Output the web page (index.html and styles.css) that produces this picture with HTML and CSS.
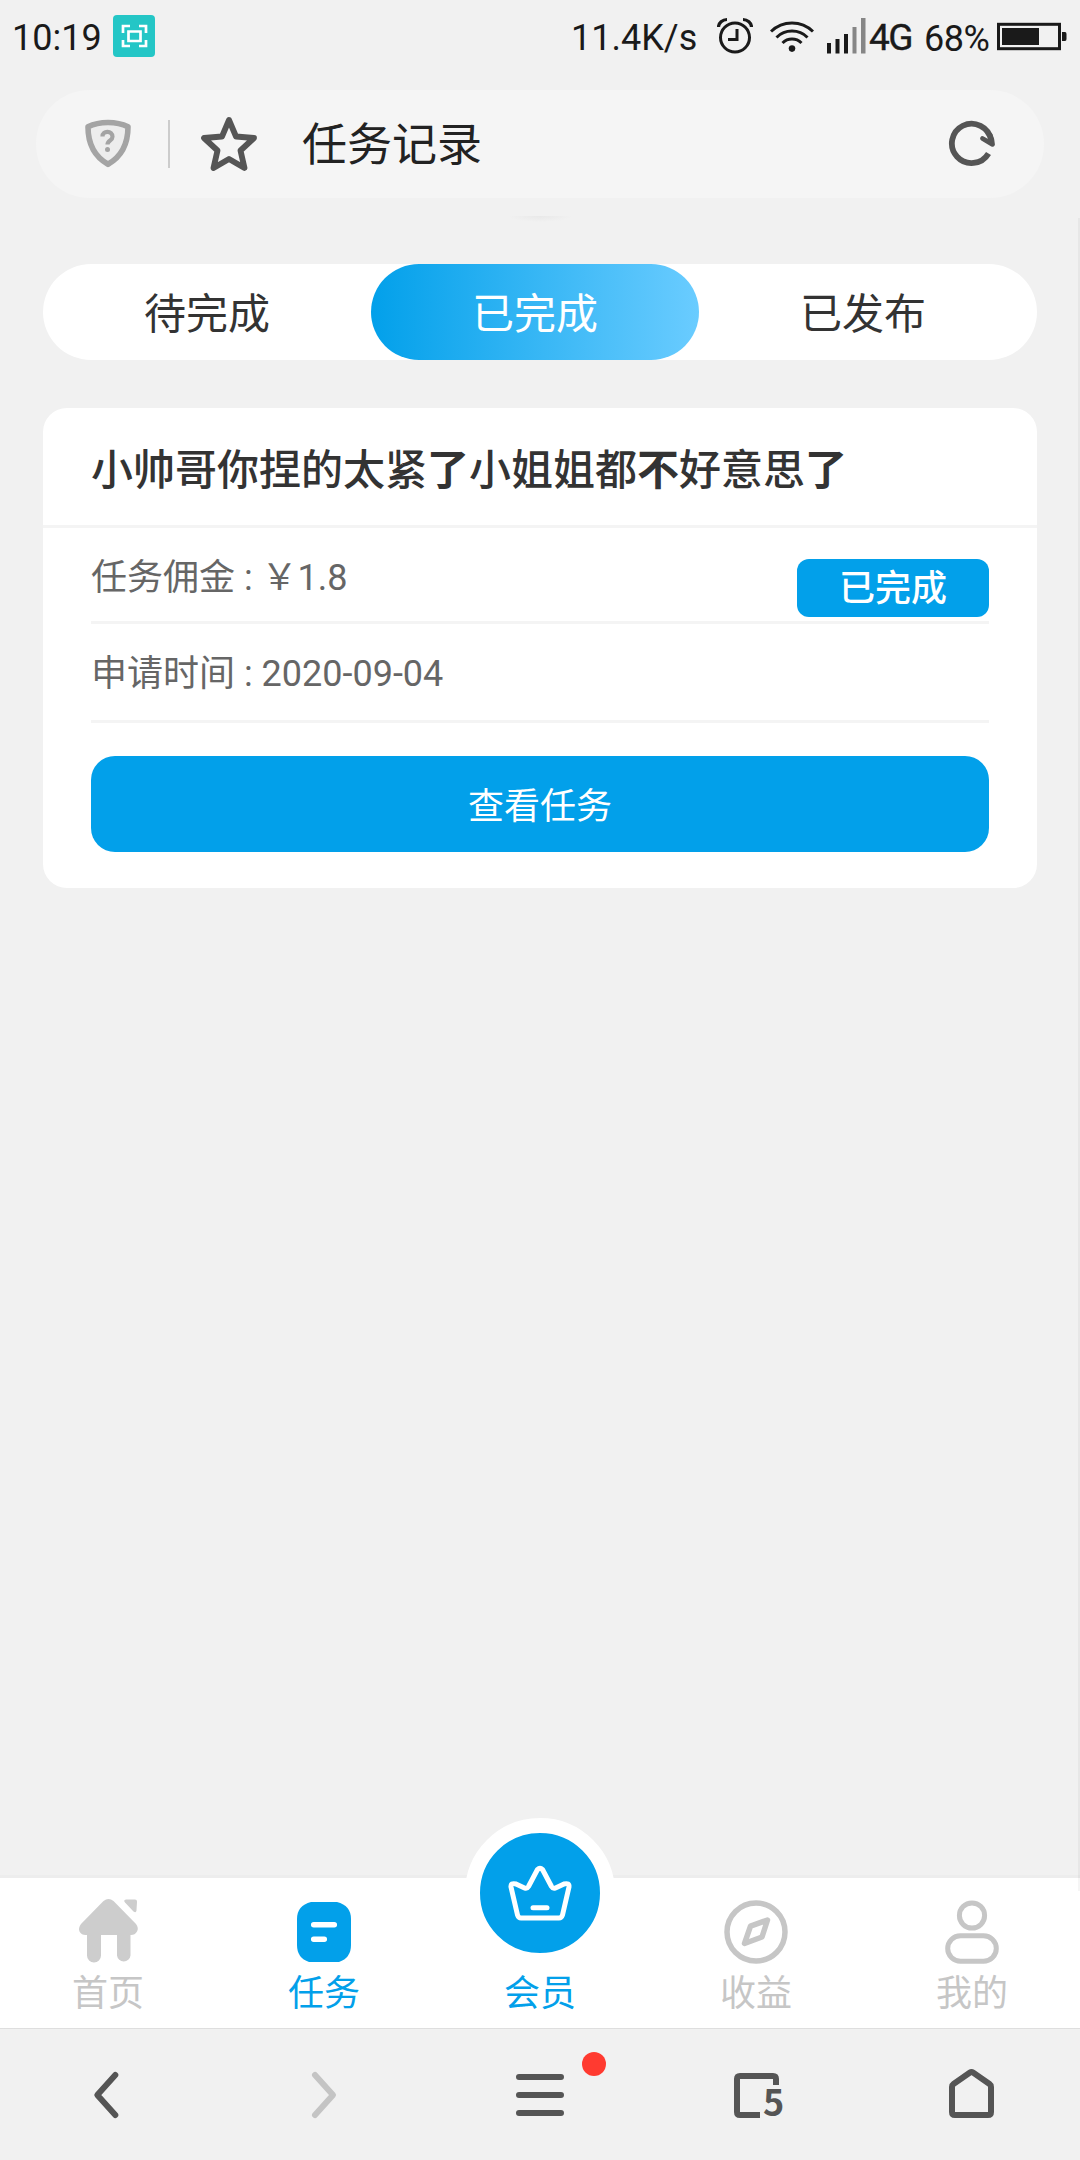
FILE: index.html
```html
<!DOCTYPE html>
<html lang="zh-CN">
<head>
    <meta charset="UTF-8">
    <meta name="viewport" content="width=device-width, initial-scale=1.0">
    <title>任务记录</title>
    <link rel="stylesheet" href="styles.css">
</head>
<body>

<div class="status-bar">
    <span class="time">10:19</span>
    <svg class="shot-icon" width="42" height="75" viewBox="113 0 42 75">
        <rect x="113" y="15" width="42" height="42" rx="4" fill="#24c6c6"/>
        <path d="M123 33v-7h7M139 26h7v7M146 40v6h-7M130 46h-7v-6M128.500 31.500h12v9.500h-12z" fill="none" stroke="#fff" stroke-width="2.700"/>
    </svg>
    <span class="speed">11.4K/s</span>
    <svg class="alarm-icon" width="36" height="75" viewBox="717 0 36 75" fill="none" stroke="#1a1a1a" stroke-width="3">
        <circle cx="735" cy="37.500" r="14.500"/>
        <path d="M737 29v10.500h-9"/>
        <path d="M718.500 27c0-4 4-7.500 8.500-7.500M751.500 27c0-4-4-7.500-8.500-7.500" stroke-width="3.200"/>
    </svg>
    <svg class="wifi-icon" width="44" height="75" viewBox="770 0 44 75" fill="none" stroke="#1a1a1a" stroke-width="3">
        <path d="M771 31.500a30 30 0 0 1 42 0M776.500 37.500a22 22 0 0 1 31 0M782.500 43a13.500 13.500 0 0 1 19 0"/>
        <path d="M788.500 48a5 4 0 0 1 7 0l-3.500 4z" fill="#1a1a1a" stroke="none"/>
        <circle cx="792" cy="48.500" r="3.200" fill="#1a1a1a" stroke="none"/>
    </svg>
    <svg class="signal-icon" width="39" height="75" viewBox="827 0 39 75" fill="#1a1a1a">
        <path d="M827 43h4v10.500h-4zM835.500 39h4v14.500h-4zM844 34h4v19.500h-4z"/>
        <path d="M852.500 27h4v26.500h-4zM861 18h4.500v35.500h-4.500z" fill="#868686"/>
    </svg>
    <span class="network">4G</span>
    <span class="percent">68%</span>
    <svg class="battery-icon" width="70" height="75" viewBox="997 0 70 75">
        <rect x="998.500" y="24.300" width="61" height="24.400" fill="none" stroke="#1a1a1a" stroke-width="3"/>
        <path d="M1002 28h37v17h-37zM1062 32h3q1.500 0 1.500 2v5q0 2-1.500 2h-3z" fill="#1a1a1a"/>
    </svg>
</div>

<div class="address-bar">
    <svg class="shield-icon" width="46" height="108" viewBox="85 90 46 108">
        <path d="M108 122.500c7 0 14 1.300 20 4.300c0 17-6 29.500-20 37.500c-14-8-20-20.500-20-37.500c6-3 13-4.300 20-4.300z" fill="#ededed" stroke="#a4a4a4" stroke-width="5.600" stroke-linejoin="round"/>
        <path d="M102.500 136.500c0-6.500 10-6 10 .3c0 4-5 3.400-5 7.700" fill="none" stroke="#a4a4a4" stroke-width="4.200"/>
        <circle cx="107.500" cy="149.500" r="2.500" fill="#a4a4a4"/>
    </svg>
    <span class="divider"></span>
    <svg class="star-icon" width="56" height="108" viewBox="201 90 56 108">
        <path d="M229 120l7 16.500l18 1.500l-13.500 12.500l4 17.500l-15.500-9l-15.500 9l4-17.500l-13.500-12.500l18-1.500z" fill="none" stroke="#555" stroke-width="5.800" stroke-linejoin="round"/>
    </svg>
    <span class="page-title">任务记录</span>
    <svg class="reload-icon" width="48" height="108" viewBox="948 90 48 108" fill="none" stroke="#555" stroke-width="5.800">
        <path d="M988.500 153.500a19.700 19.700 0 1 1 2.500-13.500"/>
        <path d="M982.500 138.500l10 5.800q-.3-5-2.200-9" stroke-width="4.800" stroke-linecap="round" stroke-linejoin="round"/>
    </svg>
</div>
<div class="pull-handle"></div>

<div class="content">
    <div class="tabs">
        <a class="tab">待完成</a>
        <a class="tab active">已完成</a>
        <a class="tab">已发布</a>
    </div>

    <div class="card">
        <h2 class="card-title">小帅哥你捏的太紧<b>了</b>小姐姐都<b>不</b>好意思<b>了</b></h2>
        <div class="card-body">
            <div class="row">
                <span>任务佣金 : ￥1.8</span>
                <span class="badge">已完成</span>
            </div>
            <div class="row row-time">
                <span>申请时间 : 2020-09-04</span>
            </div>
            <button class="view-btn">查看任务</button>
        </div>
    </div>
</div>
<div class="scrollbar"></div>

<div class="nav">
    <a class="nav-item">
        <svg width="72" height="96" viewBox="72 1878 72 96" fill="#cdcdcd">
            <path d="M103.500 1901q5-4 10 0l22.500 23q3 4 1 7.500q-2 3.500-6 3.500h-.500v20.500a6.800 6.800 0 0 1-13.500 0v-20.500h-16v20.500a7 7 0 0 1-14 0v-20.500h-1.500q-4 0-6-3.500q-1.500-3.500 1.500-7.500z"/>
            <path d="M126 1899.500h9q2 0 2 2l-.5 9q-.5 3-3 1l-8.500-9q-2-2.500 1-3z"/>
        </svg>
        <span>首页</span>
    </a>
    <a class="nav-item active">
        <svg width="72" height="96" viewBox="288 1878 72 96">
            <path d="M311 1902h26q14 3.500 14 17v26q0 13-12 17h-30q-12-4-12-17v-26q0-13.500 14-17z" fill="#02a0ea"/>
            <path d="M313.700 1924.800h20.600M313.700 1939.200h10.600" stroke="#fff" stroke-width="5.500" stroke-linecap="round"/>
        </svg>
        <span>任务</span>
    </a>
    <a class="nav-item active">
        <div class="vip">
            <svg width="64" height="56" viewBox="508 1865 64 56" fill="none" stroke="#fff" stroke-width="5" stroke-linecap="round" stroke-linejoin="round">
                <path d="M537.500 1869.500q2.500-2.500 5 0l9 17q1.500 2.500 4 1.500l8.500-4q5.500-1.500 5 3l-6.500 28q-1 3-3.500 3h-38q-2.500 0-3.500-3l-6.500-28q-.5-4.500 5-3l8.500 4q2.500 1 4-1.500z"/>
                <path d="M533 1907.800h14"/>
            </svg>
        </div>
        <span>会员</span>
    </a>
    <a class="nav-item">
        <svg width="72" height="96" viewBox="720 1878 72 96" fill="none" stroke="#c6c6c6" stroke-width="5.500">
            <circle cx="756" cy="1932" r="29"/>
            <path d="M767.500 1920l-17 6.200l-6 17.300l17.500-6.500z" stroke-linejoin="round"/>
        </svg>
        <span>收益</span>
    </a>
    <a class="nav-item">
        <svg width="72" height="96" viewBox="936 1878 72 96" fill="none" stroke="#c6c6c6" stroke-width="5">
            <circle cx="972" cy="1915.500" r="12.600"/>
            <rect x="947.700" y="1935.700" width="48.600" height="25.600" rx="12.800"/>
        </svg>
        <span>我的</span>
    </a>
</div>

<div class="browser-bar">
    <div class="tool">
        <svg width="60" height="60" viewBox="78 2064 60 60" fill="none" stroke="#555" stroke-width="6" stroke-linecap="round" stroke-linejoin="round">
            <path d="M115.300 2074l-18 20l18 20"/>
        </svg>
    </div>
    <div class="tool">
        <svg width="60" height="60" viewBox="294 2064 60 60" fill="none" stroke="#c4c4c4" stroke-width="6" stroke-linecap="round" stroke-linejoin="round">
            <path d="M315 2074l18 20l-18 20"/>
        </svg>
    </div>
    <div class="tool">
        <svg width="60" height="60" viewBox="510 2064 60 60" stroke="#555" stroke-width="6" stroke-linecap="round">
            <path d="M519 2076h42M519 2094h42M519 2112h42"/>
        </svg>
        <i class="dot"></i>
    </div>
    <div class="tool">
        <svg width="60" height="60" viewBox="726 2064 60 60" fill="none" stroke="#555" stroke-width="6" stroke-linejoin="round">
            <path d="M776 2084v-6q0-3-3-3h-33q-3 0-3 3v33q0 3 3 3h20"/>
        </svg>
        <span class="tab-count">5</span>
    </div>
    <div class="tool">
        <svg width="60" height="60" viewBox="942 2064 60 60" fill="none" stroke="#555" stroke-width="6" stroke-linejoin="round">
            <path d="M952 2086q0-2 1.500-3l16.500-11.500q1.500-1 3 0l16.500 11.500q1.500 1 1.500 3v25q0 3-3 3h-33q-3 0-3-3z"/>
        </svg>
    </div>
</div>

</body>
</html>
```
FILE: styles.css
```css
* {
    box-sizing: border-box;
}
body {
    margin: 0;
    height: 2160px;
    display: flex;
    flex-direction: column;
    background: #f1f1f1;
    font-family: Roboto, "Noto Sans CJK SC", sans-serif;
    color: #333;
    position: relative;
    overflow: hidden;
}
svg {
    display: block;
    flex: none;
}

/* phone status bar */
.status-bar {
    height: 75px;
    padding: 0 13px 0 12px;
    display: flex;
    align-items: center;
    font-size: 36px;
    line-height: 75px;
    color: #1a1a1a;
    white-space: nowrap;
}
.time {
    width: 101px;
    padding-top: 1px;
}
.speed {
    width: 134px;
    margin-left: auto;
    padding-top: 1px;
}
.alarm-icon {
    margin-left: 12px;
}
.wifi-icon {
    margin-left: 17px;
}
.signal-icon {
    margin-left: 13px;
}
.network {
    width: 46px;
    margin-left: 3px;
    font-size: 37px;
    -webkit-text-stroke: 0.4px #1a1a1a;
    letter-spacing: -1.5px;
}
.percent {
    width: 72px;
    margin-left: 9px;
    padding-top: 3px;
    letter-spacing: -0.5px;
}
.battery-icon {
    margin-left: 1px;
}

/* browser address bar */
.address-bar {
    height: 108px;
    margin: 15px 36px 0;
    padding: 0 48px 0 49px;
    display: flex;
    align-items: center;
    background: #f5f5f5;
    border-radius: 54px;
}
.divider {
    width: 2px;
    height: 48px;
    margin: 0 31px 0 37px;
    background: #ccc;
}
.page-title {
    margin-left: 45px;
    margin-right: auto;
    padding-top: 3px;
    font-size: 45px;
    line-height: 60px;
    color: #222;
}
.pull-handle {
    width: 64px;
    height: 6px;
    margin: 18px auto 0;
    background: radial-gradient(ellipse at top, #e8e8e8, #f1f1f1 70%);
}

/* page content */
.content {
    flex: 1;
    padding: 42px 43px 0;
}
.tabs {
    height: 96px;
    display: flex;
    background: #fff;
    border-radius: 48px;
}
.tab {
    width: 33%;
    height: 96px;
    font-size: 42px;
    line-height: 101px;
    text-align: center;
    border-radius: 48px;
}
.tab.active {
    color: #fff;
    background: linear-gradient(90deg, #02a0ea, #6accff);
}
.card {
    height: 480px;
    margin-top: 48px;
    background: #fff;
    border-radius: 24px;
}
.card-title {
    height: 120px;
    margin: 0;
    padding: 3px 48px 0;
    font-size: 42px;
    font-weight: 500;
    line-height: 120px;
    border-bottom: 3px solid #f4f4f4;
}
.card-title b {
    font-weight: 700;
}
.card-body {
    padding: 0 48px;
    font-size: 36px;
    color: #666;
}
.row {
    height: 96px;
    display: flex;
    justify-content: space-between;
    align-items: flex-start;
    line-height: 100px;
    border-bottom: 3px solid #f4f4f4;
}
.row-time {
    height: 99px;
}
.badge {
    width: 192px;
    height: 58px;
    margin-top: 31px;
    line-height: 61px;
    font-weight: 500;
    text-align: center;
    color: #fff;
    background: #02a0ea;
    border-radius: 12px;
}
.view-btn {
    display: block;
    width: 100%;
    height: 96px;
    margin-top: 33px;
    padding: 0 0 2px;
    border: none;
    border-radius: 24px;
    background: #02a0ea;
    color: #fff;
    font-family: inherit;
    font-size: 36px;
}
.scrollbar {
    position: absolute;
    top: 218px;
    right: 0;
    width: 2px;
    height: 1673px;
    background: rgba(0, 0, 0, 0.04);
    z-index: 2;
}

/* site navigation */
.nav {
    height: 154px;
    display: flex;
    background: #fff;
    border-top: 3px solid #ededed;
    border-bottom: 1px solid #dedede;
}
.nav-item {
    flex: 1;
    display: flex;
    flex-direction: column;
    align-items: center;
    font-size: 36px;
    line-height: 41px;
    color: #c6c6c6;
}
.nav-item.active {
    color: #02a0ea;
}
.vip {
    width: 150px;
    height: 150px;
    margin-top: -60px;
    margin-bottom: 6px;
    display: flex;
    justify-content: center;
    align-items: center;
    border: 15px solid #fff;
    border-radius: 50%;
    background: #02a0ea;
}

/* browser toolbar */
.browser-bar {
    height: 131px;
    display: flex;
}
.tool {
    flex: 1;
    display: flex;
    justify-content: center;
    align-items: center;
    position: relative;
}
.dot {
    position: absolute;
    top: 23px;
    left: 150px;
    width: 24px;
    height: 24px;
    border-radius: 50%;
    background: #ff3a30;
}
.tab-count {
    position: absolute;
    top: 51px;
    left: 115px;
    font-family: "Noto Sans CJK SC", sans-serif;
    font-size: 36px;
    font-weight: 700;
    line-height: 40px;
    color: #555;
}
```
